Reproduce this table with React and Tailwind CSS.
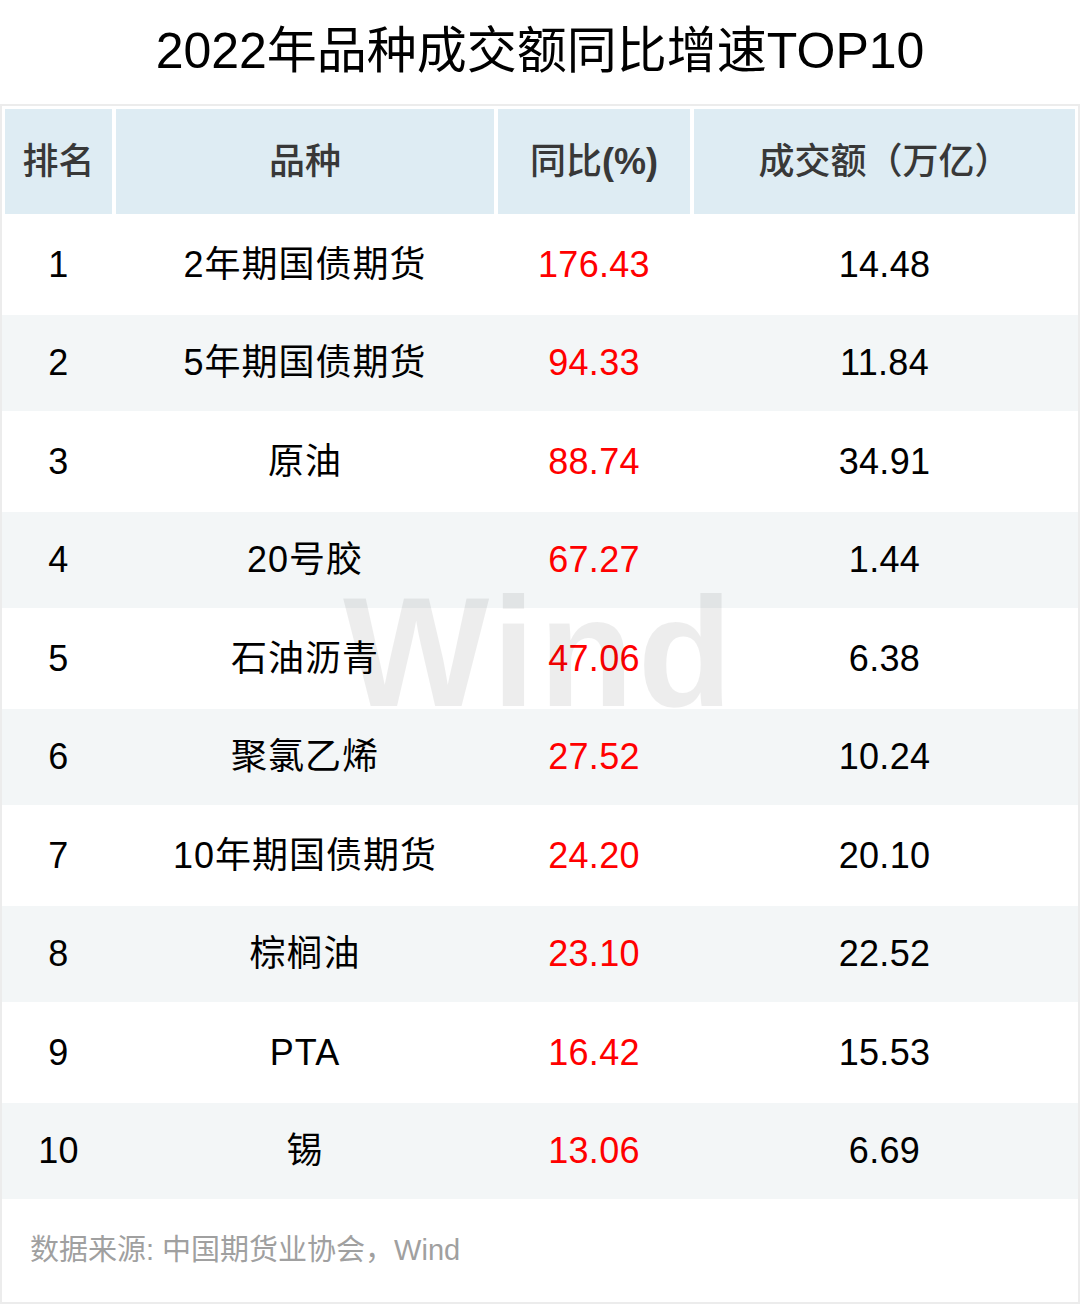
const rows = [
  { rank: 1, name: '2年期国债期货', yoy: '176.43', amount: '14.48' },
  { rank: 2, name: '5年期国债期货', yoy: '94.33', amount: '11.84' },
  { rank: 3, name: '原油', yoy: '88.74', amount: '34.91' },
  { rank: 4, name: '20号胶', yoy: '67.27', amount: '1.44' },
  { rank: 5, name: '石油沥青', yoy: '47.06', amount: '6.38' },
  { rank: 6, name: '聚氯乙烯', yoy: '27.52', amount: '10.24' },
  { rank: 7, name: '10年期国债期货', yoy: '24.20', amount: '20.10' },
  { rank: 8, name: '棕榈油', yoy: '23.10', amount: '22.52' },
  { rank: 9, name: 'PTA', yoy: '16.42', amount: '15.53' },
  { rank: 10, name: '锡', yoy: '13.06', amount: '6.69' },
];

export default function App() {
  return (
    <div className="relative w-[1080px] h-[1304px] bg-white font-['Liberation_Sans','Noto_Sans_CJK_SC',sans-serif] text-black">
      <h1 className="h-[104px] flex items-center justify-center text-[50px] leading-none pb-[2px]">
        2022年品种成交额同比增速TOP10
      </h1>

      <div className="border-2 border-[#ececec] h-[1200px] flex flex-col">
        {/* header */}
        <div className="flex gap-[4px] px-[3px] pt-[3px] text-[36px] font-medium text-[#383838]">
          <div className="w-[107px] h-[105px] bg-[#deecf3] flex items-center justify-center">排名</div>
          <div className="w-[378px] h-[105px] bg-[#deecf3] flex items-center justify-center">品种</div>
          <div className="w-[192px] h-[105px] bg-[#deecf3] flex items-center justify-center">
            同比<span className="font-bold">(%)</span>
          </div>
          <div className="w-[381px] h-[105px] bg-[#deecf3] flex items-center justify-center">成交额（万亿）</div>
        </div>

        {/* body */}
        {rows.map((r, i) => (
          <div
            key={r.rank}
            className={
              i % 2 === 0
                ? 'flex gap-[4px] px-[3px] items-center h-[101px] bg-white text-[36px] tracking-[0.3px]'
                : 'flex gap-[4px] px-[3px] items-center h-[96px] bg-[#f3f6f7] text-[36px] tracking-[0.3px]'
            }
          >
            <div className="w-[107px] text-center">{r.rank}</div>
            <div className="w-[378px] text-center tracking-[1px]">{r.name}</div>
            <div className="w-[192px] text-center text-[#ff0000]">{r.yoy}</div>
            <div className="w-[381px] text-center">{r.amount}</div>
          </div>
        ))}

        {/* source */}
        <div className="flex-1 flex items-center pl-[28px] text-[29px] text-[#a0a0a0]">
          数据来源: 中国期货业协会，Wind
        </div>
      </div>

      {/* watermark */}
      <div className="absolute left-[343px] top-[575px] text-[155px] leading-none font-bold tracking-[4px] text-black/[0.07] pointer-events-none select-none">
        Wind
      </div>
    </div>
  );
}
